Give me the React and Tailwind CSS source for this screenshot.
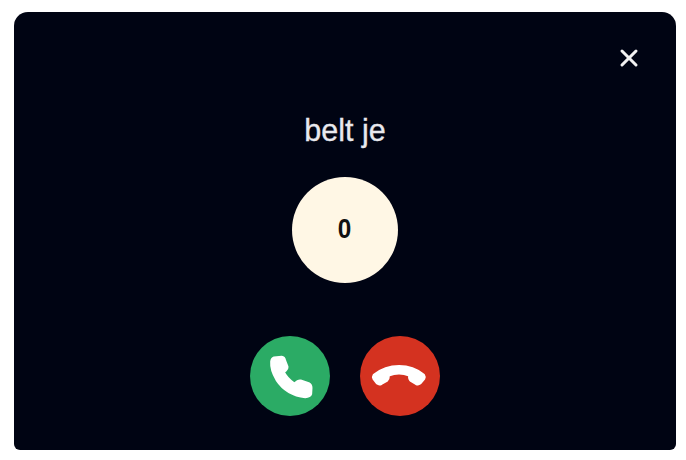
import React from 'react';
import { X } from 'lucide-react';

const PhoneIcon = () => (
  <svg viewBox="60 48 240 240" className="w-20 h-20" fill="currentColor" stroke="currentColor" strokeWidth="7" strokeLinejoin="round">
    <path d="M132 113 L155 111 Q163 112 165 122 L172 140 Q173 148 161 156 Q170 175 193 191 Q205 180 212 182 L236 190 Q244 194 244 204 L243 222 Q240 231 226 231 Q170 225 140 180 Q122 150 124 125 Q125 115 132 113 Z" />
  </svg>
);

const HangUpIcon = () => (
  <svg viewBox="390 48 240 240" className="w-20 h-20" fill="currentColor" stroke="currentColor" strokeWidth="8" strokeLinejoin="round">
    <path d="M432 165 Q465 139 507 139 Q550 139 581 165 Q585 171 582 176 L570 190 Q565 194 558 191 L543 182 Q537 177 538 166 Q507 153 476 166 Q476 177 470 182 L454 191 Q447 194 442 190 L431 176 Q428 171 432 165 Z" />
  </svg>
);

const App = () => {
  return (
    <div className="bg-white h-[460px] w-[686px] overflow-hidden pt-3 pl-[14px] font-['Liberation_Sans',Arial,sans-serif] antialiased">
      <div className="bg-[#000413] w-[662px] h-[438px] rounded-t-[14px] rounded-b-[6px] flex flex-col items-center">
        <div className="w-full flex justify-end pt-[32px] pr-[33px]">
          <button className="text-[#f2f2f2]">
            <X size={28} strokeWidth={2.6} />
          </button>
        </div>
        <h2 className="mt-[41px] text-[30.5px] leading-[34px] [-webkit-text-stroke:0.3px_#e8e9ee] text-[#e8e9ee]">belt je</h2>
        <div className="mt-[30px] w-[106px] h-[106px] rounded-full bg-[#fff7e5] flex items-center justify-center text-[27px] font-bold text-[#111]">
          <span className="-mt-0.5 scale-x-90">0</span>
        </div>
        <div className="mt-[53px] flex gap-[30px]">
          <button className="w-20 h-20 rounded-full bg-[#2bab65] text-white">
            <PhoneIcon />
          </button>
          <button className="w-20 h-20 rounded-full bg-[#d43220] text-white">
            <HangUpIcon />
          </button>
        </div>
      </div>
    </div>
  );
};

export default App;
